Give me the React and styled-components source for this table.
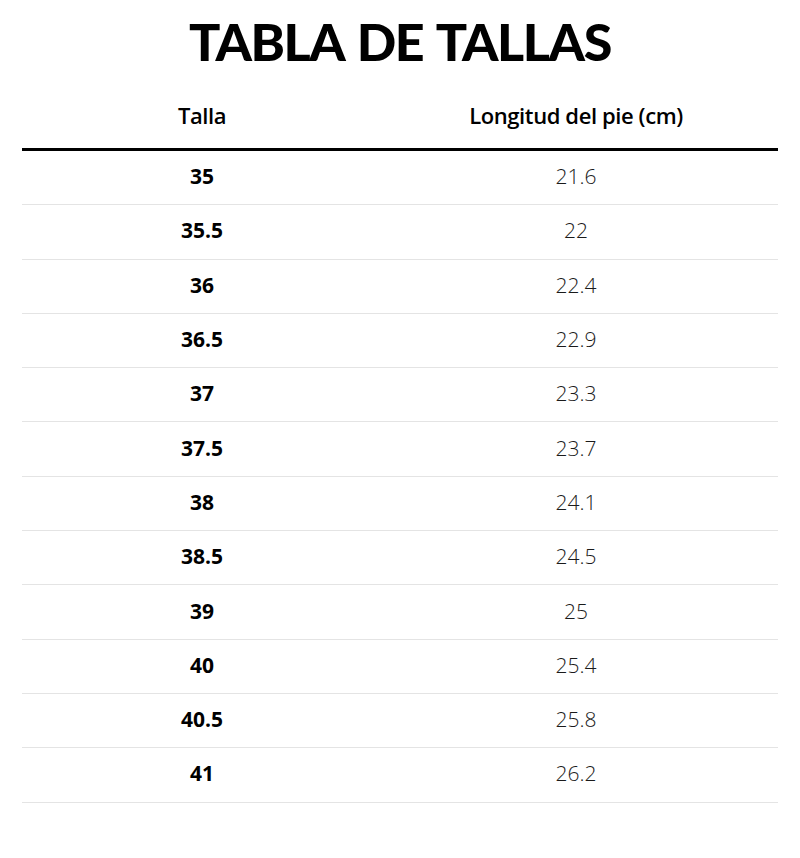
import React from 'react';
import styled, { createGlobalStyle } from 'styled-components';

const GlobalStyle = createGlobalStyle`
  html, body {
    margin: 0;
    padding: 0;
    background: #ffffff;
  }
  body {
    font-family: "Open Sans", "Liberation Sans", sans-serif;
    color: #111111;
  }
`;

const Page = styled.div`
  width: 800px;
  height: 858px;
  padding: 0 22px;
  box-sizing: border-box;
  overflow: hidden;
`;

const Title = styled.h1`
  margin: 0;
  padding-top: 8px;
  height: 74px;
  text-align: center;
  font-family: "Lato", "Liberation Sans", sans-serif;
  font-weight: 900;
  font-size: 52px;
  line-height: 66px;
  letter-spacing: -1.4px;
  word-spacing: 3px;
  color: #000000;
`;

const Table = styled.div`
  display: grid;
  grid-template-columns: 360px 1fr;
`;

const HeadCell = styled.div`
  height: 69px;
  display: flex;
  align-items: center;
  justify-content: center;
  padding-right: ${p => (p.$right ? '8px' : '0')};
  box-sizing: border-box;
  border-bottom: 3px solid #000000;
  font-weight: 600;
  font-size: 22px;
  color: #000000;
  letter-spacing: -0.4px;
`;

const Cell = styled.div`
  height: 54.3px;
  display: flex;
  align-items: center;
  justify-content: center;
  padding-right: ${p => (p.$right ? '8px' : '0')};
  padding-bottom: 3px;
  box-sizing: border-box;
  border-bottom: 1.5px solid #e4e4e4;
  font-size: 21px;
  font-weight: ${p => (p.$bold ? 700 : 300)};
  color: ${p => (p.$bold ? '#000000' : '#1a1a1a')};
`;

const sizes = [
  ['35', '21.6'],
  ['35.5', '22'],
  ['36', '22.4'],
  ['36.5', '22.9'],
  ['37', '23.3'],
  ['37.5', '23.7'],
  ['38', '24.1'],
  ['38.5', '24.5'],
  ['39', '25'],
  ['40', '25.4'],
  ['40.5', '25.8'],
  ['41', '26.2'],
];

const App = () => {
  return (
    <>
      <GlobalStyle />
      <Page>
        <Title>TABLA DE TALLAS</Title>
        <Table>
          <HeadCell>Talla</HeadCell>
          <HeadCell $right>Longitud del pie (cm)</HeadCell>
          {sizes.map(([talla, cm]) => (
            <React.Fragment key={talla}>
              <Cell $bold>{talla}</Cell>
              <Cell $right>{cm}</Cell>
            </React.Fragment>
          ))}
        </Table>
      </Page>
    </>
  );
};

export default App;
